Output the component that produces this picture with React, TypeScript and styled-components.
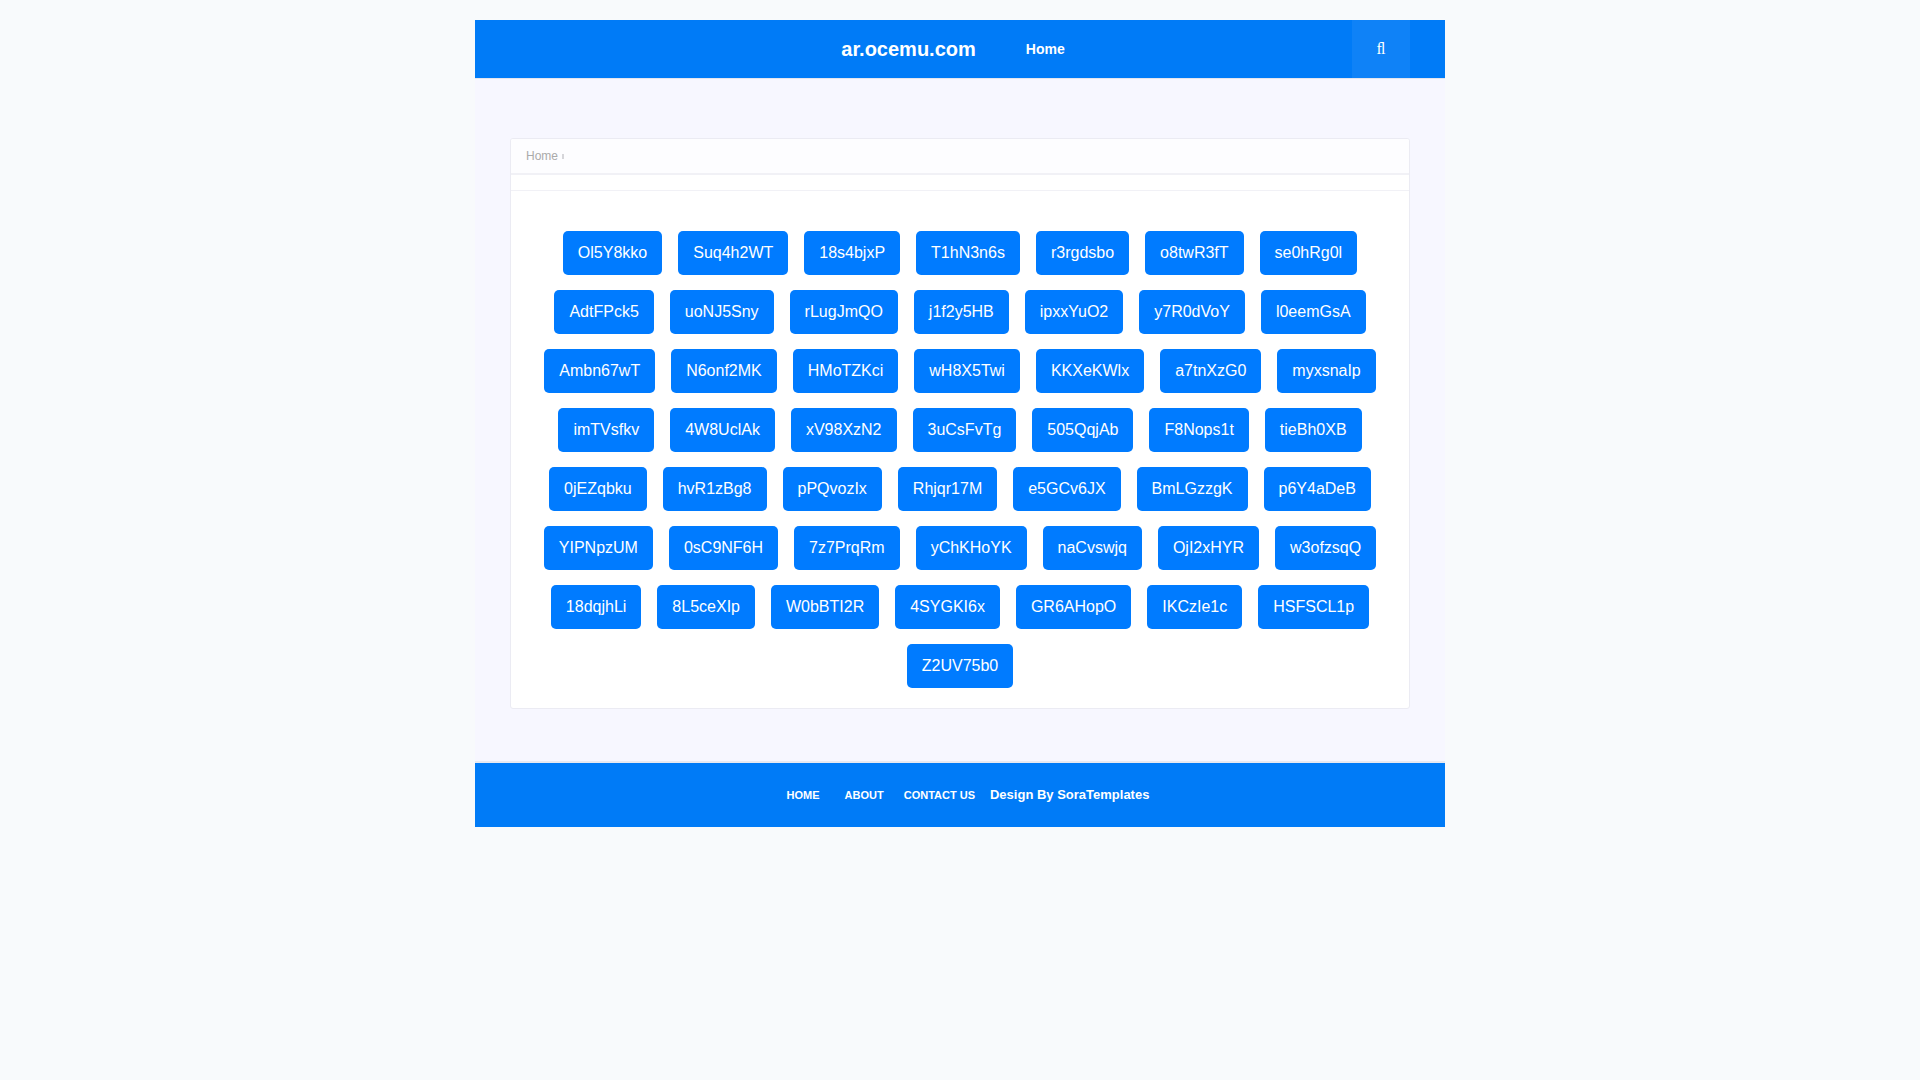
import React from "react";
import styled, { createGlobalStyle } from "styled-components";

const GlobalStyle = createGlobalStyle`
  *, *::before, *::after { box-sizing: border-box; }
  body {
    margin: 0;
    background: #f8fafc;
    font-family: "Liberation Sans", Arial, sans-serif;
  }
  a { color: inherit; text-decoration: none; }
`;

const Wrapper = styled.div`
  max-width: 970px;
  margin: 20px auto;
  background: #f7f7ff;
`;

const Header = styled.header`
  background: #007bf7;
  border-bottom: 1px solid #e4e5ee;
  padding: 0 35px;
`;

const HeaderRow = styled.div`
  position: relative;
  display: flex;
  justify-content: center;
  align-items: center;
  gap: 36px;
  height: 58px;
  color: #fff;
`;

const Logo = styled.a`
  font-size: 20px;
  line-height: 58px;
  font-weight: 700;
`;

const NavLink = styled.a`
  padding: 0 14px;
  font-size: 14px;
  line-height: 58px;
  font-weight: 700;
`;

const SearchButton = styled.button`
  position: absolute;
  top: 0;
  right: 0;
  width: 58px;
  height: 58px;
  padding: 0;
  border: 0;
  background: rgba(255, 255, 255, 0.06);
  color: #fff;
  font: 16px "Liberation Serif", serif;
  cursor: pointer;
`;

const Main = styled.main`
  padding: 59px 35px 52px;
`;

const Card = styled.article`
  background: #fff;
  border: 1px solid #ebebf3;
  border-radius: 3px;
  overflow: hidden;
`;

const Breadcrumb = styled.nav`
  display: flex;
  align-items: center;
  gap: 4px;
  height: 36px;
  padding: 0 15px;
  background: #fdfdff;
  border-bottom: 2px solid #f1f1f6;
  color: #aaa;
  font-size: 12px;
`;

const Divider = styled.span`
  width: 2px;
  height: 5px;
  border: 1px solid #d6d6da;
`;

const TitleBar = styled.div`
  height: 16px;
  border-bottom: 1px solid #f1f1f6;
`;

const LinkCloud = styled.div`
  display: flex;
  flex-wrap: wrap;
  justify-content: center;
  gap: 15px 16px;
  padding: 40px 20px 20px;
`;

const LinkButton = styled.a`
  padding: 10px 15px;
  border-radius: 5px;
  background: #007bff;
  color: #fff;
  font-size: 16px;
  line-height: 24px;
`;

const Footer = styled.footer`
  display: flex;
  justify-content: center;
  align-items: center;
  height: 66px;
  padding-left: 16px;
  border-top: 2px solid #e8e9f1;
  background: #007bf7;
  color: #fff;
  font-weight: 700;
`;

const FooterLinks = styled.nav`
  display: flex;
  gap: 20px;
  margin-right: 15px;
  font-size: 11px;
  line-height: 16px;

  a:first-child { margin-right: 5px; }
`;

const Credit = styled.span`
  font-size: 13px;
  line-height: 16px;
`;

const links = [
  "Ol5Y8kko", "Suq4h2WT", "18s4bjxP", "T1hN3n6s", "r3rgdsbo", "o8twR3fT", "se0hRg0l",
  "AdtFPck5", "uoNJ5Sny", "rLugJmQO", "j1f2y5HB", "ipxxYuO2", "y7R0dVoY", "l0eemGsA",
  "Ambn67wT", "N6onf2MK", "HMoTZKci", "wH8X5Twi", "KKXeKWlx", "a7tnXzG0", "myxsnaIp",
  "imTVsfkv", "4W8UclAk", "xV98XzN2", "3uCsFvTg", "505QqjAb", "F8Nops1t", "tieBh0XB",
  "0jEZqbku", "hvR1zBg8", "pPQvozIx", "Rhjqr17M", "e5GCv6JX", "BmLGzzgK", "p6Y4aDeB",
  "YIPNpzUM", "0sC9NF6H", "7z7PrqRm", "yChKHoYK", "naCvswjq", "OjI2xHYR", "w3ofzsqQ",
  "18dqjhLi", "8L5ceXIp", "W0bBTI2R", "4SYGKI6x", "GR6AHopO", "IKCzIe1c", "HSFSCL1p",
  "Z2UV75b0",
];

export default function App() {
  return (
    <>
      <GlobalStyle />
      <Wrapper>
        <Header>
          <HeaderRow>
            <Logo href="#">ar.ocemu.com</Logo>
            <NavLink href="#">Home</NavLink>
            <SearchButton type="button" aria-label="Search">{"\uFB02"}</SearchButton>
          </HeaderRow>
        </Header>
        <Main>
          <Card>
            <Breadcrumb>
              <a href="#">Home</a>
              <Divider />
            </Breadcrumb>
            <TitleBar />
            <LinkCloud>
              {links.map((name) => (
                <LinkButton key={name} href="#">{name}</LinkButton>
              ))}
            </LinkCloud>
          </Card>
        </Main>
        <Footer>
          <FooterLinks>
            <a href="#">HOME</a>
            <a href="#">ABOUT</a>
            <a href="#">CONTACT US</a>
          </FooterLinks>
          <Credit>Design By <a href="#">SoraTemplates</a></Credit>
        </Footer>
      </Wrapper>
    </>
  );
}
